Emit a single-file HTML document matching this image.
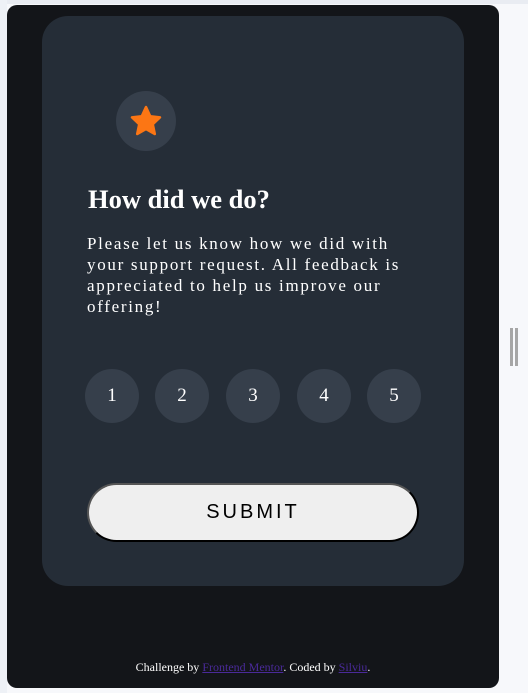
<!DOCTYPE html>
<html><head><meta charset="utf-8"><style>
html,body{margin:0;padding:0;width:528px;height:693px;overflow:hidden;background:#f7f8fb;}
.strip{position:absolute;left:0;top:0;width:7px;height:693px;background:#eef1f6;}
.top{position:absolute;left:0;top:0;width:528px;height:4px;background:#e9ecf2;}
.panel{position:absolute;left:7px;top:5px;width:492px;height:683px;background:#131519;border-radius:10px;}
.card{position:absolute;left:42px;top:16px;width:422px;height:570px;background:#252d37;border-radius:26px;}
.star{position:absolute;left:116px;top:91px;width:60px;height:60px;border-radius:50%;background:#363f4b;}
h1{position:absolute;left:88px;top:184px;margin:0;font:bold 26.5px "Liberation Serif",serif;color:#fff;white-space:nowrap;}
p{position:absolute;left:87px;top:233px;width:380px;margin:0;font:17px/21px "Liberation Serif",serif;letter-spacing:1.7px;color:#fff;white-space:nowrap;}
.n{position:absolute;top:369px;width:54px;height:54px;border-radius:50%;background:#363f4b;color:#fff;font:19px/54px "Liberation Serif",serif;text-align:center;}
.btn{position:absolute;left:87px;top:483px;width:328px;height:55px;border-radius:30px;background:#efefef;border:2px solid #000;border-top-color:#555;border-left-color:#555;box-sizing:content-box;text-align:center;font:20px/55px "Liberation Sans",sans-serif;letter-spacing:3px;color:#000;}
.foot{position:absolute;left:7px;width:492px;top:660px;text-align:center;font:12px "Liberation Serif",serif;color:#fff;}
.foot a{color:#4a2a9a;text-decoration:underline;}
.sb{position:absolute;top:328px;width:3px;height:38px;background:#a6a6a6;}
</style></head><body>
<div class="top"></div><div class="strip"></div>
<div class="panel"></div>
<div class="card"></div>
<div class="star"><svg width="60" height="60" viewBox="0 0 60 60"><path d="M30 16 L34.2 25.2 L44 26.4 L36.8 33.2 L38.8 43 L30 38 L21.2 43 L23.2 33.2 L16 26.4 L25.8 25.2 Z" fill="#fc7614" stroke="#fc7614" stroke-width="2.5" stroke-linejoin="round"/></svg></div>
<h1>How did we do?</h1>
<p>Please let us know how we did with<br>your support request. All feedback is<br>appreciated to help us improve our<br>offering!</p>
<div class="n" style="left:85px">1</div>
<div class="n" style="left:155px">2</div>
<div class="n" style="left:226px">3</div>
<div class="n" style="left:297px">4</div>
<div class="n" style="left:367px">5</div>
<div class="btn">SUBMIT</div>
<div class="foot">Challenge by <a>Frontend Mentor</a>. Coded by <a>Silviu</a>.</div>
<div class="sb" style="left:510px"></div><div class="sb" style="left:515px"></div>
</body></html>
